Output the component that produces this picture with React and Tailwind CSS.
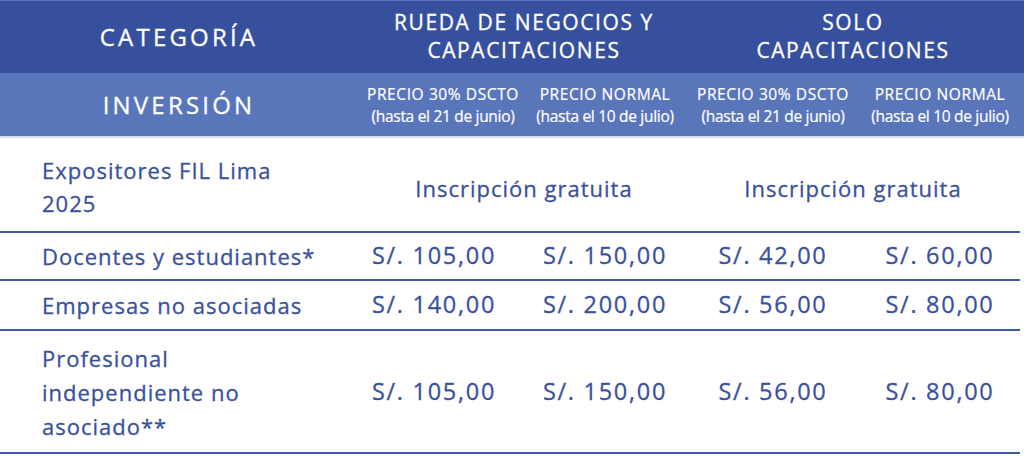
import React from "react";

const cols = "grid grid-cols-[362px_162px_162px_174px_160px]";

const groups = [
  ["RUEDA DE NEGOCIOS Y", "CAPACITACIONES"],
  ["SOLO", "CAPACITACIONES"],
];

const subHeads = [
  ["PRECIO 30% DSCTO", "(hasta el 21 de junio)"],
  ["PRECIO NORMAL", "(hasta el 10 de julio)"],
  ["PRECIO 30% DSCTO", "(hasta el 21 de junio)"],
  ["PRECIO NORMAL", "(hasta el 10 de julio)"],
];

const rows = [
  { name: ["Docentes y estudiantes*"], prices: ["S/. 105,00", "S/. 150,00", "S/. 42,00", "S/. 60,00"], h: "h-[48px]" },
  { name: ["Empresas no asociadas"], prices: ["S/. 140,00", "S/. 200,00", "S/. 56,00", "S/. 80,00"], h: "h-[50px]" },
  { name: ["Profesional", "independiente no", "asociado**"], prices: ["S/. 105,00", "S/. 150,00", "S/. 56,00", "S/. 80,00"], h: "h-[123px]" },
];

export default function App() {
  return (
    <div className="w-[1024px] h-[456px] bg-white overflow-hidden font-['Open_Sans',sans-serif]">
      {/* cabecera */}
      <div className={`${cols} h-[73px] bg-[#36509e] text-white border-t border-[#5a74b8] [-webkit-text-stroke:0.3px_white]`}>
        <div className="flex items-center justify-center pr-1 text-[24px] tracking-[3.2px]">
          CATEGORÍA
        </div>
        {groups.map((g, i) => (
          <div key={i} className="col-span-2 flex flex-col items-center justify-center text-[21px] leading-[28px] tracking-[1.6px] pb-0.5">
            <span>{g[0]}</span>
            <span>{g[1]}</span>
          </div>
        ))}
      </div>
      <div className={`${cols} h-[65px] bg-[#5a76ba] text-white border-b-2 border-[#cfe3ee]`}>
        <div className="flex items-center justify-center pr-1 text-[24px] tracking-[3.2px] [-webkit-text-stroke:0.3px_white]">
          INVERSIÓN
        </div>
        {subHeads.map((s, i) => (
          <div key={i} className="flex flex-col items-center justify-center text-[15.5px] leading-[22px] [-webkit-text-stroke:0.2px_white]">
            <span className="tracking-[0.6px]">{s[0]}</span>
            <span className="tracking-[-0.3px]">{s[1]}</span>
          </div>
        ))}
      </div>

      {/* cuerpo */}
      <div className="w-[1020px] text-[#3a519c] text-[22px] tracking-[1px] [-webkit-text-stroke:0.3px_#3a519c]">
        <div className={`${cols} h-[95px] pt-1 border-b-2 border-[#3f5aa4]`}>
          <div className="flex flex-col justify-center pl-[42px] leading-[33px] whitespace-nowrap">
            <span>Expositores FIL Lima</span>
            <span>2025</span>
          </div>
          <div className="col-span-2 flex items-center justify-center pt-1">Inscripción gratuita</div>
          <div className="col-span-2 flex items-center justify-center pt-1">Inscripción gratuita</div>
        </div>
        {rows.map((r, i) => (
          <div key={i} className={`${cols} ${r.h} border-b-2 border-[#3f5aa4]`}>
            <div className="flex flex-col justify-center pl-[42px] leading-[34px] whitespace-nowrap">
              {r.name.map((n) => (
                <span key={n}>{n}</span>
              ))}
            </div>
            {r.prices.map((p, j) => (
              <div key={j} className={`flex items-center justify-center text-[23.5px] tracking-[1.7px] ${j === 0 ? "pr-[18px]" : ""}`}>
                {p}
              </div>
            ))}
          </div>
        ))}
      </div>
    </div>
  );
}
